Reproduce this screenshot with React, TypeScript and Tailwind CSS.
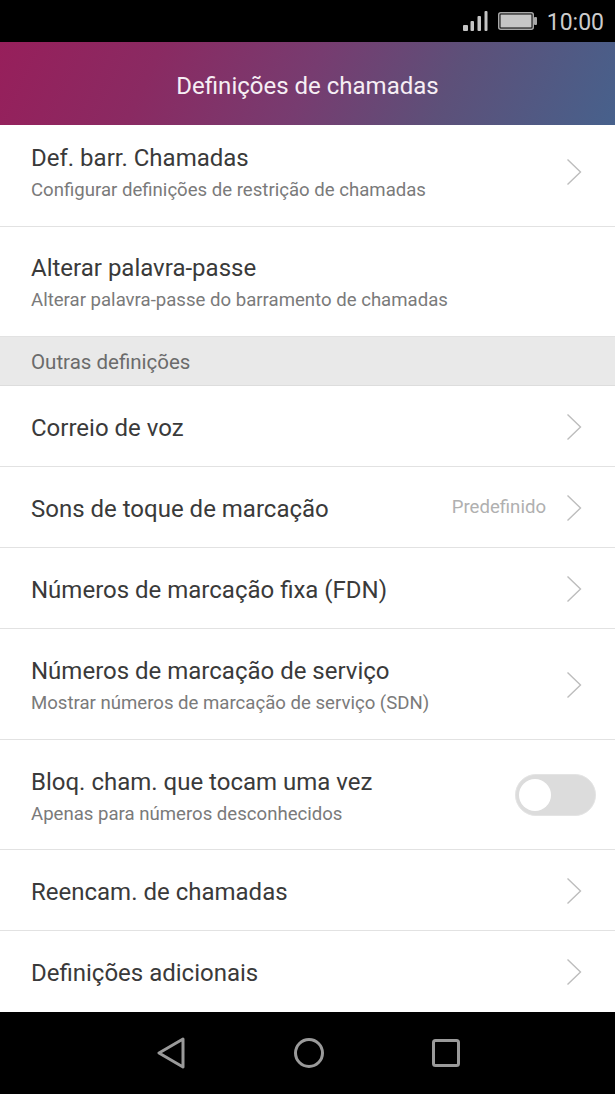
import React from "react";

const Chevron = () => (
  <svg width="16" height="28" viewBox="0 0 16 28" fill="none" className="shrink-0">
    <path d="M1.5 1.5 L14.5 14 L1.5 26.5" stroke="#bdbdbd" strokeWidth="1.4" />
  </svg>
);

const Toggle = () => (
  <div className="w-[81px] h-[42px] rounded-full bg-[#dcdcdc] border border-[#e4e4e4] flex items-center pl-[3px] shrink-0">
    <div className="w-[32px] h-[32px] rounded-full bg-white" />
  </div>
);

interface RowProps {
  title: string;
  subtitle?: string;
  value?: string;
  chevron?: boolean;
  toggle?: boolean;
  boxClass: string;
  textClass?: string;
}

const Row: React.FC<RowProps> = ({ title, subtitle, value, chevron, toggle, boxClass, textClass }) => (
  <div className={`${boxClass} flex items-center pl-[31px] pr-[33px] border-b border-[#e2e2e2]`}>
    <div className={`flex-1 min-w-0 ${textClass ?? (subtitle ? "pt-[1px]" : "pt-[2px]")}`}>
      <div className="text-[24px] leading-[30px] text-[#3a3a3a]">{title}</div>
      {subtitle && <div className="text-[18.6px] leading-[24px] mt-[5px] text-[#7a7a7a]">{subtitle}</div>}
    </div>
    {value && <span className="text-[18.6px] text-[#b0b0b0] mr-[20px]">{value}</span>}
    {chevron && <Chevron />}
    {toggle && <div className="-mr-[14px]"><Toggle /></div>}
  </div>
);

export default function App() {
  return (
    <div className="w-[615px] h-[1094px] flex flex-col bg-white overflow-hidden font-['Roboto',sans-serif]">
      <div className="h-[42px] bg-black flex items-center justify-end pr-[11px] gap-[10px]">
        <svg width="25" height="20" viewBox="0 0 25 20" fill="#c4c4c4">
          <rect x="0" y="14" width="5" height="6" rx="1" />
          <rect x="7.5" y="10" width="3.5" height="10" rx="1" />
          <rect x="14.5" y="5" width="3.5" height="15" rx="1" />
          <rect x="21.5" y="0" width="3" height="20" rx="1" />
        </svg>
        <svg width="39" height="18" viewBox="0 0 39 18" fill="none">
          <rect x="0.75" y="0.75" width="34.5" height="16.5" rx="2" stroke="#a8a8a8" strokeWidth="1.5" />
          <rect x="2.5" y="2.5" width="31" height="13" fill="#c6c6c6" />
          <rect x="36" y="5" width="3" height="8" rx="1" fill="#a8a8a8" />
        </svg>
        <span className="text-[23px] leading-none text-[#cccccc] pt-[3px]">10:00</span>
      </div>
      <div className="h-[83px] flex items-center justify-center pt-[4px] bg-[linear-gradient(115deg,#971f5b_0%,#8a2a62_25%,#773c70_50%,#5d5079_72%,#47618c_100%)]">
        <span className="text-[24px] text-[#f6eef4]">Definições de chamadas</span>
      </div>
      <Row boxClass="h-[102px] pb-[8px]" title="Def. barr. Chamadas" subtitle="Configurar definições de restrição de chamadas" chevron />
      <Row boxClass="h-[110px] pt-[1px]" title="Alterar palavra-passe" subtitle="Alterar palavra-passe do barramento de chamadas" />
      <div className="h-[49px] flex items-center pl-[31px] pt-[3px] bg-[#e9e9e9] border-b border-[#dddddd] text-[20.5px] text-[#6b6b6b]">
        Outras definições
      </div>
      <Row boxClass="h-[81px] pt-[1px]" title="Correio de voz" chevron />
      <Row boxClass="h-[81px] pt-[1px]" title="Sons de toque de marcação" value="Predefinido" chevron />
      <Row boxClass="h-[81px] pt-[1px]" title="Números de marcação fixa (FDN)" chevron />
      <Row boxClass="h-[111px] pt-[1px]" title="Números de marcação de serviço" subtitle="Mostrar números de marcação de serviço (SDN)" chevron />
      <Row boxClass="h-[110px] pt-[1px]" textClass="pt-[3px]" title="Bloq. cham. que tocam uma vez" subtitle="Apenas para números desconhecidos" toggle />
      <Row boxClass="h-[81px] pt-[1px]" title="Reencam. de chamadas" chevron />
      <div className="h-[81px] flex items-center pl-[31px] pr-[33px] pt-[1px]">
        <div className="flex-1 pt-[2px] text-[24px] leading-[30px] text-[#3a3a3a]">Definições adicionais</div>
        <Chevron />
      </div>
      <div className="flex-1 bg-black flex items-center pl-[157px] gap-[109px]">
        <svg width="28" height="32" viewBox="0 0 28 32" fill="none">
          <path d="M26 2 L2 16 L26 30 Z" stroke="#9a9a9a" strokeWidth="3" strokeLinejoin="round" />
        </svg>
        <svg width="30" height="30" viewBox="0 0 30 30" fill="none">
          <circle cx="15" cy="15" r="13.5" stroke="#9a9a9a" strokeWidth="3" />
        </svg>
        <svg width="28" height="28" viewBox="0 0 28 28" fill="none" className="-ml-[1px]">
          <rect x="1.5" y="1.5" width="25" height="25" rx="2" stroke="#9a9a9a" strokeWidth="3" />
        </svg>
      </div>
    </div>
  );
}
